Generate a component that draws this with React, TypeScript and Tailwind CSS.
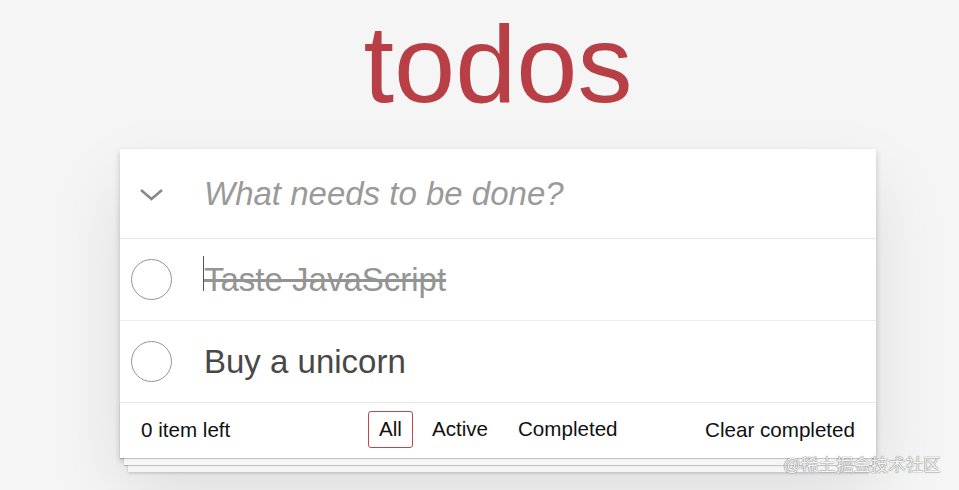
import React from "react";

export default function App() {
  const font = { fontFamily: '"Liberation Sans", Arial, sans-serif' };
  return (
    <div className="relative min-h-[490px] w-full overflow-hidden bg-[#f5f5f5]" style={font}>
      <div className="ml-[120px] w-[756px]">
        <h1 className="pt-[9px] text-center text-[110px] leading-[110px] font-normal text-[#b83f45]">
          todos
        </h1>
        <div className="relative mt-[30px] bg-white shadow-[0_3px_6px_rgba(0,0,0,0.2),0_34px_69px_rgba(0,0,0,0.1)]">
          {/* header */}
          <div className="flex h-[90px] items-center border-b border-[#e6e6e6]">
            <div className="flex w-[84px] justify-start pl-[19px] pt-[3px]">
              <svg width="25" height="14" viewBox="0 0 25 14">
                <polyline points="2,2 12.5,11 23,2" fill="none" stroke="#8a8a8a" strokeWidth="2.6" />
              </svg>
            </div>
            <span className="text-[33px] italic text-[#9a9a9a]">What needs to be done?</span>
          </div>
          {/* item 1 */}
          <div className="flex h-[82px] items-center border-b border-[#ededed]">
            <div className="flex w-[84px] items-center pl-[11px]">
              <div className="h-[41px] w-[41px] rounded-full border border-[#949494]" />
            </div>
            <span className="relative text-[33px] text-[#949494] line-through">
              <span className="absolute left-[-1px] top-[1px] h-[35px] w-px bg-[#555]" />
              Taste JavaScript
            </span>
          </div>
          {/* item 2 */}
          <div className="flex h-[82px] items-center border-b border-[#e6e6e6]">
            <div className="flex w-[84px] items-center pl-[11px]">
              <div className="h-[41px] w-[41px] rounded-full border border-[#949494]" />
            </div>
            <span className="text-[33px] text-[#484848]">Buy a unicorn</span>
          </div>
          {/* footer */}
          <div className="relative flex h-[55px] items-center text-[20.6px] text-[#111]">
            <div className="pointer-events-none absolute bottom-0 left-0 right-0 h-[55px] shadow-[0_1px_1px_rgba(0,0,0,0.2),0_11px_0_-4px_#f6f6f6,0_12px_1px_-4px_rgba(0,0,0,0.2),0_22px_0_-8px_#f6f6f6,0_23px_3px_-8px_rgba(0,0,0,0.2)]" />
            <div className="relative flex h-full w-full items-center bg-white">
              <span className="w-[248px] pl-[21px]">0 item left</span>
              <div className="flex items-center gap-[8px] pb-[2px]">
                <span className="rounded-[3px] border border-[#c0464d] px-[10px] py-[2px]">All</span>
                <span className="rounded-[3px] border border-transparent px-[10px] py-[2px]">Active</span>
                <span className="rounded-[3px] border border-transparent px-[10px] py-[2px]">Completed</span>
              </div>
              <span className="ml-auto pr-[21px]">Clear completed</span>
            </div>
          </div>
        </div>
      </div>
      <div
        className="absolute left-[783px] top-[452px] text-[17.5px] text-[#f3f3f3] [text-shadow:0_0_1px_#777,0_0_1px_#777]"
        style={{ fontFamily: '"Liberation Sans", "Noto Sans CJK SC", sans-serif' }}
      >
        @稀土掘金技术社区
      </div>
    </div>
  );
}
